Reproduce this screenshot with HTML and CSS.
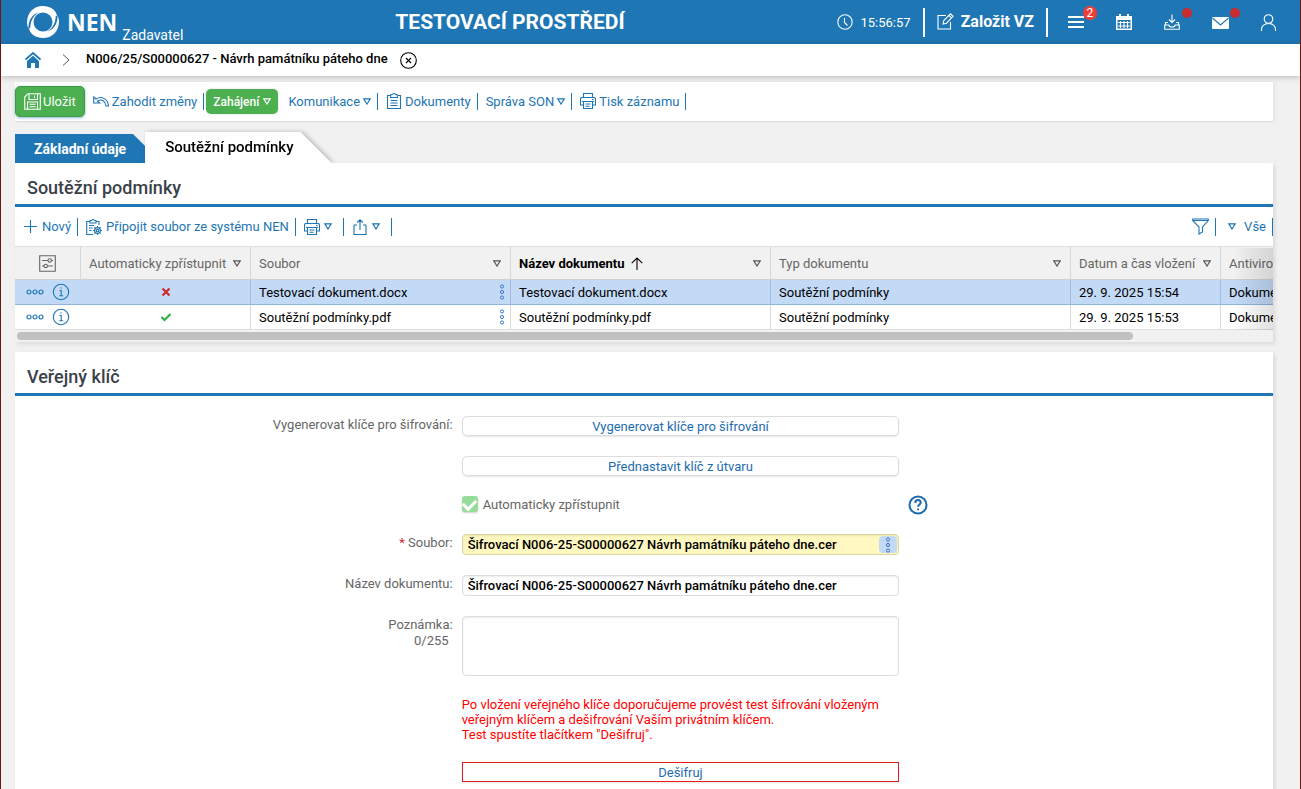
FILE: index.html
```html
<!DOCTYPE html>
<html lang="cs">
<head>
    <meta charset="UTF-8">
    <meta name="viewport" content="width=device-width, initial-scale=1.0">
    <title>NEN - Soutěžní podmínky</title>
    <link rel="stylesheet" href="styles.css">
</head>
<body>

    <!-- icons -->
    <svg class="sprite" aria-hidden="true">
        <symbol id="i-tri" viewBox="0 0 8 7"><path d="M.8.9h6.4L4 6.1z"/></symbol>
        <symbol id="i-clock" viewBox="0 0 16 16"><circle cx="8" cy="8" r="7.2"/><path d="M7.5 4v4.5l3 3"/></symbol>
        <symbol id="i-edit" viewBox="0 0 17 17"><path d="M9 2.5H1v13.500h12.500V9M6 11l.8-3.500L13.500.8l2.500 2.500L9.500 10.200zM12 2.300l2.500 2.500"/></symbol>
        <symbol id="i-print" viewBox="0 0 16 16"><path d="M3.500 4.500v-4h9v4M3.500 12H.5V6q0-1.500 1.500-1.500h12q1.500 0 1.500 1.500v6h-3M3.500 8.500h9v7h-9zM2 8.500h12M5.500 11h5M5.500 13.200h4M12 6.500h1.500"/></symbol>
        <symbol id="i-dots-v" viewBox="0 0 6 16"><circle cx="3" cy="2.500" r="1.600"/><circle cx="3" cy="8" r="1.600"/><circle cx="3" cy="13.500" r="1.600"/></symbol>
        <symbol id="i-dots-h" viewBox="0 0 18 6"><circle cx="3" cy="3" r="2"/><circle cx="9" cy="3" r="2"/><circle cx="15" cy="3" r="2"/></symbol>
        <symbol id="i-info" viewBox="0 0 18 18"><circle cx="9" cy="9" r="7.700"/><path d="M7.500 7.500h1.700v5M7.300 12.700h3.900M8.300 5h1.400"/></symbol>
    </svg>

    <header class="topbar">
        <div class="brand">
            <svg class="logo" viewBox="0 0 32 32" aria-hidden="true">
                <path fill="#fff" fill-rule="evenodd" d="M16 0C23 0 28.500 3.500 29.800 9C31.500 11 32 13 32 16C31.500 26 25 32 16 32C9 32 3.500 28.500 2.200 23C.5 21 0 19 0 16C.5 6 7 0 16 0zM16 6.500A9.500 9.500 0 1 0 16 25.500A9.500 9.500 0 1 0 16 6.500z"/>
                <path fill="#1e76b4" d="M1.500 22.500C1 15 5 8 12 6.500C7 9 3.500 14 3.300 22zM30.500 9.500C31 17 27 24 20 25.500C25 23 28.500 18 28.700 10z"/>
            </svg>
            <span class="brand-name">NEN</span>
            <span class="brand-role">Zadavatel</span>
        </div>
        <div class="env">TESTOVACÍ PROSTŘEDÍ</div>
        <div class="top-actions">
            <div class="clock"><svg class="icon i16"><use href="#i-clock"/></svg>15:56:57</div>
            <a class="new-vz" href="#"><svg class="icon i17"><use href="#i-edit"/></svg>Založit VZ</a>
            <div class="top-icons">
                <button type="button" aria-label="Úkoly">
                    <svg class="icon bold i16" viewBox="0 0 16 16"><path d="M0 3h16M0 8h16M0 13h16"/></svg>
                    <span class="badge">2</span>
                </button>
                <button type="button" aria-label="Kalendář">
                    <svg class="icon i16" viewBox="0 0 16 16"><path fill="currentColor" stroke="none" fill-rule="evenodd" d="M0 2h3V0h2v2h6V0h2v2h3v14H0zM1.500 6v8.500h13V6z"/><path d="M4.500 7v7M8 7v7M11.500 7v7M2 8.500h12M2 12h12"/></svg>
                </button>
                <button type="button" aria-label="Stažené soubory">
                    <svg class="icon i16" viewBox="0 0 16 16"><path d="M8 .5v8M5 5.500l3 3 3-3M1.500 10.500v-2H4M12 8.500h2.500v2M.7 11h4q.5 2 3.300 2t3.300-2h4v4.300H.7z"/></svg>
                    <span class="dot"></span>
                </button>
                <button type="button" aria-label="Zprávy">
                    <svg class="icon i17" viewBox="0 0 17 17"><rect x="0" y="3" width="17" height="12" rx="1" fill="currentColor" stroke="none"/><path class="flap" d="M.5 4l8 7 8-7"/></svg>
                    <span class="dot"></span>
                </button>
                <button type="button" aria-label="Uživatel">
                    <svg class="icon i17" viewBox="0 0 17 17"><circle cx="8.500" cy="5" r="4.300"/><path d="M1.500 17v-1.500C1.500 12 4.500 9.500 8.500 9.500s7 2.500 7 6V17"/></svg>
                </button>
            </div>
        </div>
    </header>

    <nav class="crumbs">
        <a href="#" aria-label="Domů">
            <svg class="home" viewBox="0 0 16 16"><path fill="none" stroke="currentColor" stroke-width="1.800" d="M.5 7.500L8 1l7.500 6.500"/><path fill="currentColor" d="M2 9l6-5.200L14 9v7h-4v-5H6v5H2z"/></svg>
        </a>
        <svg class="sep" viewBox="0 0 8 12"><path d="M1 .5L7 6l-6 5.500"/></svg>
        <strong>N006/25/S00000627 - Návrh památníku páteho dne</strong>
        <button type="button" class="close" aria-label="Zavřít">
            <svg class="icon i17" viewBox="0 0 17 17"><circle cx="8.500" cy="8.500" r="7.800"/><path d="M6 6l5 5M11 6l-5 5"/></svg>
        </button>
    </nav>

    <main>
        <div class="toolbar">
            <button type="button" class="save">
                <svg class="icon i17" viewBox="0 0 17 17"><path d="M4 .7h12.300v15.600H.7V4zM5 1v5.500h8.500V1M10.500 2.500v2.500M3.500 16V9h10v7M5.500 11.300h6M5.500 13.700h6"/></svg>Uložit
            </button>
            <button type="button" class="link bar">
                <svg class="icon i16" viewBox="0 0 16 16"><path d="M.7 4v6h6L4.500 8C9 5.500 12.500 8 13 13h2.500C15 5.500 8 2.500 3 6z"/></svg>Zahodit změny
            </button>
            <button type="button" class="start">Zahájení <svg class="tri"><use href="#i-tri"/></svg></button>
            <button type="button" class="link bar">Komunikace <svg class="tri"><use href="#i-tri"/></svg></button>
            <button type="button" class="link bar">
                <svg class="icon i16" viewBox="0 0 16 16"><path d="M4.500 2.500h-3v13h13v-13h-3M5 1.500h1.500q1.500-2 3 0H11l.5 3h-7zM4.500 7.500h7M4.500 10h7M4.500 12.500h7"/></svg>Dokumenty
            </button>
            <button type="button" class="link bar">Správa SON <svg class="tri"><use href="#i-tri"/></svg></button>
            <button type="button" class="link bar"><svg class="icon i16"><use href="#i-print"/></svg>Tisk záznamu</button>
        </div>

        <div class="tabs">
            <a class="tab" href="#">Základní údaje</a>
            <a class="tab active" href="#"><span>Soutěžní podmínky</span></a>
        </div>

        <section class="card">
            <h2>Soutěžní podmínky</h2>
            <div class="grid-tools">
                <button type="button" class="link bar"><svg class="icon i13" viewBox="0 0 13 13"><path d="M6.500 0v13M0 6.500h13"/></svg>Nový</button>
                <button type="button" class="link bar">
                    <svg class="icon i16" viewBox="0 0 16 16"><path d="M4 2.500H.7v13H7M10 2.500h3V6M4 1.500h1.500q1.500-2 3 0H10v2.500H4zM3 6.500h5M3 9h3.500M3 11.500h2.500"/><circle cx="11.500" cy="11.500" r="1.300"/><circle cx="11.500" cy="11.500" r="2.900"/><path d="M11.500 7v1.500M11.500 14.500V16M7 11.500h1.500M14.500 11.500H16M8.300 8.300l1.100 1.100M13.600 13.600l1.100 1.100M14.700 8.300l-1.100 1.100M9.400 13.600l-1.100 1.100"/></svg>Připojit soubor ze systému NEN
                </button>
                <button type="button" class="link bar wide" aria-label="Tisk"><svg class="icon i16"><use href="#i-print"/></svg><svg class="tri"><use href="#i-tri"/></svg></button>
                <button type="button" class="link bar wide" aria-label="Export">
                    <svg class="icon i16" viewBox="0 0 16 16"><path d="M5 6H2v9.500h12V6h-3M8 11V.8M5.200 3.500L8 .8l2.800 2.700"/></svg><svg class="tri"><use href="#i-tri"/></svg>
                </button>
                <div class="grid-filter">
                    <button type="button" class="link bar" aria-label="Filtr">
                        <svg class="icon i17" viewBox="0 0 17 17"><path d="M.7 1h15.600v1.500L10.500 9v5L7 16V9L.7 2.500zM.7 2.500h15.600"/></svg>
                    </button>
                    <button type="button" class="link bar view"><svg class="tri"><use href="#i-tri"/></svg>Vše</button>
                </div>
            </div>

            <div class="table-wrap">
                <table>
                    <colgroup>
                        <col class="c-menu"><col class="c-auto"><col class="c-file"><col class="c-file"><col class="c-type"><col class="c-date"><col>
                    </colgroup>
                    <thead>
                        <tr>
                            <th class="center"><svg class="icon i17" viewBox="0 0 17 17"><path d="M.7.7h15.600v15.600H.7zM3 5.500h6M12.500 5.500H14M3 11h2M8.500 11H14"/><circle cx="10.700" cy="5.500" r="1.700"/><circle cx="6.700" cy="11" r="1.700"/></svg></th>
                            <th><div class="head">Automaticky zpřístupnit<svg class="tri"><use href="#i-tri"/></svg></div></th>
                            <th><div class="head">Soubor<svg class="tri"><use href="#i-tri"/></svg></div></th>
                            <th class="sorted"><div class="head">Název dokumentu<svg class="icon arrow" viewBox="0 0 12 13"><path d="M6 13V1M.7 6.200L6 1l5.300 5.200"/></svg><svg class="tri"><use href="#i-tri"/></svg></div></th>
                            <th><div class="head">Typ dokumentu<svg class="tri"><use href="#i-tri"/></svg></div></th>
                            <th><div class="head">Datum a čas vložení<svg class="tri"><use href="#i-tri"/></svg></div></th>
                            <th>Antivirová kontrola</th>
                        </tr>
                    </thead>
                    <tbody>
                        <tr class="selected">
                            <td><div class="row-menu"><svg class="dots-h"><use href="#i-dots-h"/></svg><svg class="icon i18"><use href="#i-info"/></svg></div></td>
                            <td class="center"><svg class="mark no" viewBox="0 0 12 10"><path d="M2.500 1.500l7 7M9.500 1.500l-7 7"/></svg></td>
                            <td><div class="file">Testovací dokument.docx<svg class="dots-v"><use href="#i-dots-v"/></svg></div></td>
                            <td>Testovací dokument.docx</td>
                            <td>Soutěžní podmínky</td>
                            <td>29. 9. 2025 15:54</td>
                            <td>Dokument</td>
                        </tr>
                        <tr>
                            <td><div class="row-menu"><svg class="dots-h"><use href="#i-dots-h"/></svg><svg class="icon i18"><use href="#i-info"/></svg></div></td>
                            <td class="center"><svg class="mark yes" viewBox="0 0 12 10"><path d="M1.500 5l3 3L10.500 2"/></svg></td>
                            <td><div class="file">Soutěžní podmínky.pdf<svg class="dots-v"><use href="#i-dots-v"/></svg></div></td>
                            <td>Soutěžní podmínky.pdf</td>
                            <td>Soutěžní podmínky</td>
                            <td>29. 9. 2025 15:53</td>
                            <td>Dokument</td>
                        </tr>
                    </tbody>
                </table>
            </div>
            <div class="scroll"><div class="thumb"></div></div>
        </section>

        <section class="card">
            <h2>Veřejný klíč</h2>
            <form class="form">
                <label for="gen">Vygenerovat klíče pro šifrování:</label>
                <button type="button" id="gen" class="wide-btn">Vygenerovat klíče pro šifrování</button>

                <button type="button" class="wide-btn">Přednastavit klíč z útvaru</button>

                <div class="check">
                    <input type="checkbox" id="auto" checked>
                    <label for="auto">Automaticky zpřístupnit</label>
                </div>
                <button type="button" class="help" aria-label="Nápověda">
                    <svg viewBox="0 0 20 20"><circle cx="10" cy="10" r="8.500"/><path d="M7.300 8c0-4 5.400-3.600 5.400-.4 0 2-2.700 2-2.700 4.200M10 13.500v1.700"/></svg>
                </button>

                <label for="file"><span class="req">*</span> Soubor:</label>
                <div class="file-field">
                    <input type="text" id="file" value="Šifrovací N006-25-S00000627 Návrh památníku páteho dne.cer">
                    <button type="button" aria-label="Možnosti souboru"><svg class="dots-v"><use href="#i-dots-v"/></svg></button>
                </div>

                <label for="docname">Název dokumentu:</label>
                <input type="text" id="docname" class="field" value="Šifrovací N006-25-S00000627 Návrh památníku páteho dne.cer">

                <label for="note">Poznámka:<span class="count">0/255</span></label>
                <textarea id="note" class="field"></textarea>

                <p class="warning">Po vložení veřejného klíče doporučujeme provést test šifrování vloženým veřejným klíčem a dešifrování Vaším privátním klíčem.<br>Test spustíte tlačítkem "Dešifruj".</p>

                <button type="button" class="wide-btn danger">Dešifruj</button>
            </form>
        </section>
    </main>

</body>
</html>
```
FILE: styles.css
```css
* {
    box-sizing: border-box;
}
html {
    height: 100%;
    overflow: hidden;
}
body {
    margin: 0;
    min-height: 100%;
    border-left: 1px solid #651a16;
    border-right: 1px solid #651a16;
    background-color: #f1f1f1;
    font-family: Roboto, "Liberation Sans", sans-serif;
    font-size: 13px;
    color: #000;
}
button, input, textarea {
    font: inherit;
}
button {
    padding: 0;
    border: none;
    background: none;
    color: inherit;
    white-space: nowrap;
    cursor: pointer;
}
a {
    color: inherit;
    text-decoration: none;
}

/* icons */
.sprite {
    display: none;
}
svg {
    flex: none;
}
.icon {
    display: block;
    fill: none;
    stroke: currentColor;
    stroke-width: 1.1;
}
.icon.bold {
    stroke-width: 2;
}
.i13 { width: 13px; height: 13px; }
.i16 { width: 16px; height: 16px; }
.i17 { width: 17px; height: 17px; }
.i18 { width: 18px; height: 18px; }
.tri {
    width: 8px;
    height: 7px;
    fill: none;
    stroke: currentColor;
    stroke-width: 1.1;
}
.dots-h {
    width: 18px;
    height: 6px;
    fill: none;
    stroke: #1e76b4;
    stroke-width: 1.2;
}
.dots-v {
    width: 6px;
    height: 16px;
    fill: none;
    stroke: #3c74c8;
    stroke-width: 1;
}

/* header */
.topbar {
    display: flex;
    justify-content: space-between;
    align-items: center;
    height: 44px;
    padding: 0 23px 0 26px;
    background-color: #1e76b4;
    color: #fff;
}
.brand {
    display: flex;
    align-items: center;
    height: 44px;
}
.logo {
    width: 32px;
    height: 32px;
}
.brand-name {
    margin: 0 5px 0 8px;
    font-family: "Noto Sans", sans-serif;
    font-size: 23px;
    font-weight: 700;
}
.brand-role {
    align-self: flex-end;
    font-size: 14px;
    line-height: 18px;
}
.env {
    font-size: 21px;
    font-weight: 700;
}
.top-actions {
    display: flex;
    align-items: center;
}
.clock, .new-vz {
    display: flex;
    align-items: center;
    height: 29px;
    border-right: 2px solid #fff;
}
.clock {
    gap: 8px;
    padding-right: 12px;
}
.new-vz {
    gap: 7px;
    padding: 0 12px 2px;
    font-size: 16px;
    font-weight: 700;
}
.top-icons {
    display: flex;
    gap: 31px;
    padding-left: 20px;
}
.top-icons button {
    position: relative;
    width: 17px;
}
.badge {
    position: absolute;
    top: -8px;
    left: 15px;
    width: 14px;
    height: 14px;
    border-radius: 50%;
    background-color: #ef3e36;
    font-size: 12px;
    line-height: 14px;
}
.dot {
    position: absolute;
    top: -6px;
    left: 18px;
    width: 10px;
    height: 10px;
    border-radius: 50%;
    background-color: #c92b2f;
}
.flap {
    stroke: #1e76b4;
}

/* breadcrumbs */
.crumbs {
    display: flex;
    align-items: center;
    height: 32px;
    padding-left: 24px;
    background-color: #fff;
    box-shadow: 0 1px 6px rgba(0, 0, 0, .25);
}
.home {
    display: block;
    width: 16px;
    height: 16px;
    color: #1e76b4;
}
.sep {
    width: 8px;
    height: 12px;
    margin: 0 16px 0 21px;
    fill: none;
    stroke: #555;
}
.crumbs strong {
    font-weight: 500;
    line-height: 18px;
    padding-bottom: 2px;
}
.close {
    margin-left: 12px;
}

main {
    padding: 6px 27px 0 14px;
}

/* toolbar */
.toolbar {
    display: flex;
    align-items: center;
    height: 40px;
    margin-bottom: 10px;
    border-bottom: 1px solid #ddd;
    background-color: #fff;
    box-shadow: 2px 0 3px rgba(0, 0, 0, .06);
}
.link {
    display: flex;
    align-items: center;
    gap: 4px;
    color: #1e76b4;
}
.toolbar .link {
    gap: 3px;
    height: 17px;
    padding: 0 6px 1px 8px;
}
.toolbar .bar {
    border-right: 1px solid #1e76b4;
}
.save {
    display: flex;
    align-items: center;
    gap: 2px;
    height: 31px;
    padding: 0 8px 1px;
    border: 1px solid #3d9a45;
    border-radius: 5px;
    background-color: #4caf50;
    box-shadow: 0 1px 3px rgba(30, 118, 180, .5);
    color: #fff;
}
.start {
    display: flex;
    align-items: center;
    gap: 4px;
    height: 25px;
    margin: 0 2px;
    padding: 0 7px;
    border-radius: 5px;
    background-color: #4caf50;
    box-shadow: 0 0 2px rgba(0, 0, 0, .2);
    color: #fff;
    font-size: 12px;
    font-weight: 500;
}

/* tabs */
.tabs {
    display: flex;
    align-items: flex-end;
    height: 31px;
    font-size: 14px;
}
.tab {
    height: 29px;
    padding: 0 19px;
    background-color: #1e76b4;
    clip-path: polygon(0 0, 118px 0, 100% 12px, 100% 100%, 0 100%);
    color: #fff;
    font-weight: 700;
    line-height: 31px;
}
.tab.active {
    height: 31px;
    padding: 0;
    background: none;
    clip-path: none;
    filter: drop-shadow(2px 0 2px rgba(0, 0, 0, .25));
    color: #000;
    font-size: 15px;
    font-weight: 500;
}
.tab.active span {
    display: block;
    padding: 0 38px 0 20px;
    background-color: #fff;
    clip-path: polygon(0 0, calc(100% - 31px) 0, 100% 100%, 0 100%);
}

/* cards */
.card {
    position: relative;
    margin-bottom: 10px;
    background-color: #fff;
    box-shadow: 2px 2px 4px rgba(0, 0, 0, .1);
}
.card h2 {
    height: 44px;
    margin: 0;
    padding: 4px 12px 0;
    border-bottom: 3px solid #1e76b4;
    color: #3a4148;
    font-size: 18px;
    font-weight: 500;
    line-height: 41px;
}
.grid-tools {
    display: flex;
    align-items: center;
    height: 39px;
    padding-left: 9px;
}
.grid-tools .link {
    height: 18px;
}
.grid-tools .bar {
    margin-right: 8px;
    padding-right: 6px;
    border-right: 1px solid #1e76b4;
}
.grid-tools .link:first-child {
    gap: 5px;
}
.grid-tools .wide {
    padding-right: 11px;
}
.grid-filter {
    display: flex;
    margin-left: auto;
}
.grid-filter .view {
    gap: 8px;
    margin: 0 0 0 4px;
}

/* table */
.table-wrap {
    overflow: hidden;
}
table {
    width: 1410px;
    border-collapse: separate;
    border-spacing: 0;
    table-layout: fixed;
}
.c-menu { width: 66px; }
.c-auto { width: 170px; }
.c-file { width: 260px; }
.c-type { width: 300px; }
.c-date { width: 150px; }
th, td {
    padding: 0 9px 0 8px;
    border-right: 1px solid #d8d8d8;
    text-align: left;
    white-space: nowrap;
}
th {
    height: 34px;
    border-top: 1px solid #ddd;
    border-bottom: 1px solid #d0d0d0;
    background-color: #f1f1f1;
    color: #666;
    font-weight: 400;
}
td {
    height: 25px;
    border-bottom: 1px solid #e0e0e0;
}
td:first-child {
    border-right: none;
}
.head {
    display: flex;
    align-items: center;
    gap: 6px;
}
.head .tri {
    margin-left: auto;
    stroke: #555;
}
.sorted {
    color: #000;
    font-weight: 700;
}
.arrow {
    width: 12px;
    height: 13px;
}
.center {
    padding: 0 8px;
    text-align: center;
}
.center svg {
    display: block;
    margin: 0 auto;
}
.selected td {
    border-right-color: #a3bcdd;
    border-bottom-color: #8fb4de;
    background-color: #c3daf7;
}
.selected td:first-child {
    border-right: none;
}
.row-menu {
    display: flex;
    align-items: center;
    gap: 8px;
    padding-left: 3px;
    color: #1e76b4;
}
.file {
    display: flex;
    align-items: center;
    justify-content: space-between;
    margin-right: -4px;
}
.mark {
    width: 12px;
    height: 10px;
    fill: none;
    stroke-width: 2.2;
}
.no { stroke: #d02a2a; }
.yes { stroke: #2fb344; }
.table-wrap::after {
    content: "";
    position: absolute;
    right: 0;
    bottom: 12px;
    width: 40px;
    height: 82px;
    background: linear-gradient(to right, rgba(0, 0, 0, 0), rgba(0, 0, 0, .12));
}
.scroll {
    height: 12px;
    padding: 2px;
    background-color: #f1f1f1;
}
.thumb {
    width: 89%;
    height: 8px;
    border-radius: 4px;
    background-color: #c1c1c1;
}

/* form */
.form {
    display: grid;
    grid-template-columns: 6fr 6fr 5fr;
    gap: 20px 9px;
    padding: 20px 0;
}
.form > label {
    grid-column: 1;
    padding-top: 1px;
    color: #666;
    line-height: 16px;
    text-align: right;
}
.req {
    color: #d02a2a;
}
.count {
    display: block;
    padding-right: 4px;
}
.wide-btn {
    grid-column: 2;
    height: 20px;
    border: 1px solid #ddd;
    border-radius: 5px;
    background-color: #fff;
    box-shadow: 0 1px 2px rgba(0, 0, 0, .1);
    color: #1e6cb0;
}
.danger {
    border-color: #e31b23;
    border-radius: 0;
}
.check {
    grid-column: 2;
    display: flex;
    align-items: flex-start;
    gap: 5px;
    height: 18px;
    color: #666;
}
.check input {
    appearance: none;
    width: 16px;
    height: 16px;
    margin: 0;
    border-radius: 3px;
    background-color: #98dc9b;
    box-shadow: 0 1px 2px rgba(0, 0, 0, .2);
}
.check input::before {
    content: "";
    display: block;
    width: 6px;
    height: 10px;
    margin: 1px auto;
    border: solid #fff;
    border-width: 0 3px 3px 0;
    transform: rotate(45deg);
}
.check label {
    line-height: 18px;
}
.help {
    display: flex;
    align-items: center;
    justify-self: start;
    height: 18px;
}
.help svg {
    width: 20px;
    height: 20px;
    fill: none;
    stroke: #1e6cb0;
    stroke-width: 2;
}
.field, .file-field {
    grid-column: 2;
    min-width: 0;
    height: 21px;
    padding: 0 5px;
    border: 1px solid #ddd;
    border-radius: 4px;
    background-color: #fff;
    box-shadow: inset 0 1px 2px rgba(0, 0, 0, .08);
    color: #000;
    font-weight: 500;
}
.file-field {
    display: flex;
    align-items: center;
    padding: 0 1px 0 5px;
    border-color: #dcd6a0;
    background-color: #fff8c0;
}
.file-field input {
    flex: 1;
    min-width: 0;
    padding: 0;
    border: none;
    background: none;
    color: #000;
}
.file-field button {
    display: flex;
    align-items: center;
    justify-content: center;
    width: 18px;
    height: 17px;
    border-radius: 4px;
    background-color: #c3daf7;
}
textarea.field {
    height: 60px;
    resize: none;
}
.warning {
    grid-column: 2;
    min-height: 46px;
    margin: 0;
    padding-top: 1px;
    color: #f00;
    line-height: 15px;
}
```
